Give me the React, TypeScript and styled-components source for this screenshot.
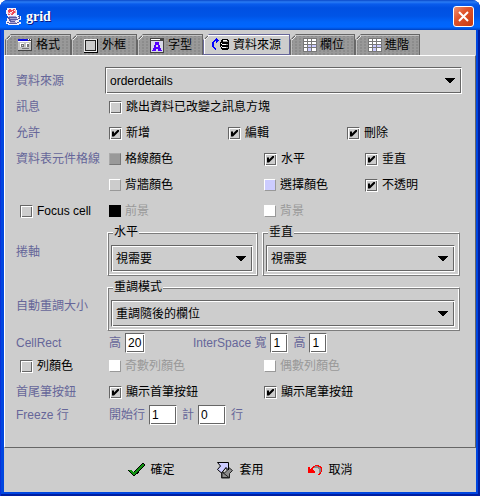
import React, { useId } from "react";
import styled, { createGlobalStyle, css } from "styled-components";

const face = "#cdcdcd";
const dark = "#666666";
const tabFace = "#999999";
const labelColor = "#666699";

const GlobalStyle = createGlobalStyle`
  *, *::before, *::after { box-sizing: border-box; }
  body {
    margin: 0;
    background: #fff;
    color: #000;
    font: 12px/16px "Liberation Sans", "Noto Sans CJK TC", sans-serif;
  }
  button, input, select { font: inherit; color: inherit; }
`;

const etched = css`
  border: 1px solid;
  border-color: ${dark} #fff #fff ${dark};
  box-shadow: inset 1px 1px #fff, inset -1px -1px ${dark};
`;

const Window = styled.main`
  display: flex;
  flex-direction: column;
  min-height: 100vh;
  padding: 0 4px 4px;
  border-radius: 8px 8px 0 0;
  background: #0046e0;
  box-shadow: inset 1px 0 #0831d9, inset -2px -2px #001ea0;
`;

const TitleBar = styled.header`
  display: flex;
  align-items: center;
  gap: 4px;
  height: 30px;
  margin: 0 -4px;
  padding: 3px 6px 0;
  border-radius: 8px 8px 0 0;
  background: linear-gradient(
    #0a48c8 0, #2a7cf4 2px, #0a5cec 4px, #0050e2 8px, #0054e6 16px,
    #0064fa 22px, #0066ff 27px, #0050d8 29px, #0040c0 30px
  );
`;

const Title = styled.h1`
  flex: 1;
  margin: 0;
  color: #fff;
  font: bold 14px/18px "Liberation Serif", serif;
  text-shadow: 1px 1px #0a1883;
`;

const CloseButton = styled.button`
  display: grid;
  place-items: center;
  width: 21px;
  height: 21px;
  padding: 0;
  border: 1px solid #fff;
  border-radius: 3px;
  background: linear-gradient(135deg, #ee9070, #e0542c 40%, #c83a10);
`;

const Body = styled.div`
  display: flex;
  flex: 1;
  flex-direction: column;
  padding-top: 4px;
  background: ${face};
`;

const TabBar = styled.nav`
  display: flex;
  padding-left: 1px;
`;

const Tab = styled.button<{ $selected?: boolean }>`
  display: flex;
  align-items: center;
  gap: 3px;
  height: 21px;
  padding: ${(p) => (p.$selected ? "0 8px" : "0 10px 0 11px")};
  white-space: nowrap;
  border: 1px solid ${dark};
  border-bottom: ${(p) => (p.$selected ? `1px solid ${labelColor}` : 0)};
  border-color: ${(p) => (p.$selected ? labelColor : dark)};
  box-shadow: inset 1px 1px ${(p) => (p.$selected ? "#fff" : "#c4c4c4")};
  background:
    linear-gradient(135deg, ${dark} 5px, #eee 5px, #eee 6px, transparent 6px) border-box,
    radial-gradient(circle at 1px 1px, ${(p) => (p.$selected ? face : "#8c8c8c")} 1px, transparent 1px) 0 0 / 4px 3px,
    ${(p) => (p.$selected ? face : tabFace)};
  clip-path: polygon(6px 0, 100% 0, 100% 100%, 0 100%, 0 6px);
`;

const Panel = styled.section`
  flex: 1;
  padding: 11px 13px 16px 11px;
  border: 1px solid;
  border-color: #fff ${dark} ${dark} #fff;
`;

const Row = styled.div<{ $height?: number }>`
  display: grid;
  grid-template-columns: 89px minmax(0, 1fr);
  align-items: center;
  min-height: ${(p) => p.$height ?? 26}px;
`;

const RowLabel = styled.span`
  color: ${labelColor};
  white-space: nowrap;
`;

const RowCheck = styled.div`
  padding-left: 4px;
`;

const Columns = styled.div<{ $template: string }>`
  display: grid;
  grid-template-columns: ${(p) => p.$template};
  align-items: center;
  padding-left: 4px;
`;

const Groups = styled.div<{ $template: string }>`
  display: grid;
  grid-template-columns: ${(p) => p.$template};
  gap: 4px;
  padding: 0 2px 3px;
`;

const LastGroups = styled(Groups)`
  padding: 0 2px 2px;
`;

const Fieldset = styled.fieldset`
  min-width: 0;
  margin: 0;
  padding: 5px 4px 3px 3px;
  border: 1px solid;
  border-color: #fff #7c7c7c #7c7c7c #fff;
  box-shadow: inset 1px 1px #7c7c7c, inset -1px -1px #fff;
`;

const Legend = styled.legend`
  margin-left: 2px;
  padding: 0 1px;
  background: ${face};
`;

const ComboBox = styled.div`
  display: grid;
  grid-template-columns: minmax(0, 1fr);
  align-items: center;
  > * { grid-area: 1 / 1; }
  > svg {
    justify-self: end;
    margin-right: 7px;
    pointer-events: none;
  }
`;

const Select = styled.select`
  ${etched}
  appearance: none;
  width: 100%;
  height: 27px;
  padding: 0 20px 0 4px;
  border-radius: 0;
  background: ${face};
`;

const CheckLabel = styled.label`
  display: flex;
  align-items: center;
  gap: 4px;
  white-space: nowrap;
`;

const CheckBox = styled.input`
  ${etched}
  appearance: none;
  flex: none;
  width: 13px;
  height: 13px;
  margin: 0;
  background: ${face};
  &:checked::before {
    content: "";
    display: block;
    width: 7px;
    height: 7px;
    margin: 2px;
    background: #000;
    clip-path: polygon(0 2px, 2px 2px, 2px 4px, 6px 0, 7px 0, 7px 2px, 2px 7px, 0 7px);
  }
`;

const SwatchButton = styled.button<{ $color: string }>`
  display: flex;
  align-items: center;
  gap: 4px;
  padding: 0;
  border: 0;
  background: none;
  white-space: nowrap;
  &:disabled { color: ${tabFace}; }
  &::before {
    content: "";
    width: 12px;
    height: 12px;
    border: 1px solid;
    border-color: ${(p) =>
      p.$color === "#000000" ? "#000" : p.$color === "#999999" ? "#aaa #777 #777 #aaa" : "#fff #999 #999 #fff"};
    background: ${(p) => p.$color};
  }
`;

const Fields = styled.div`
  display: flex;
  align-items: center;
  gap: 5px;
  padding-left: 4px;
  color: ${labelColor};
`;

const FieldLabel = styled.label<{ $apart?: boolean }>`
  display: flex;
  align-items: center;
  gap: 4px;
  margin-left: ${(p) => (p.$apart ? 43 : 0)}px;
  white-space: nowrap;
`;

const TextBox = styled.input<{ $width: number }>`
  ${etched}
  width: ${(p) => p.$width}px;
  height: 20px;
  padding: 0 0 0 2px;
  border-radius: 0;
  background: #fff;
  color: #000;
`;

const Footer = styled.footer`
  display: flex;
  justify-content: center;
  gap: 42px;
  padding: 13px 0;
`;

const ActionButton = styled.button`
  display: flex;
  align-items: center;
  gap: 5px;
  padding: 0;
  border: 0;
  background: none;
`;

function Check({ text, on }: { text: string; on?: boolean }) {
  return (
    <CheckLabel>
      <CheckBox type="checkbox" defaultChecked={on} />
      {text}
    </CheckLabel>
  );
}

function Combo({ name, value }: { name: string; value: string }) {
  return (
    <ComboBox>
      <Select aria-label={name} defaultValue={value}>
        <option>{value}</option>
      </Select>
      <svg width="10" height="5" shapeRendering="crispEdges">
        <path d="M0 0h10v1H9v1H8v1H7v1H6v1H4V4H3V3H2V2H1V1H0z" />
      </svg>
    </ComboBox>
  );
}

function Group({ title, value }: { title: string; value: string }) {
  return (
    <Fieldset>
      <Legend>{title}</Legend>
      <Combo name={title} value={value} />
    </Fieldset>
  );
}

function Field({ text, value, width, apart }: { text: string; value: string; width: number; apart?: boolean }) {
  const id = useId();
  return (
    <FieldLabel htmlFor={id} $apart={apart}>
      {text}
      <TextBox id={id} defaultValue={value} $width={width} />
    </FieldLabel>
  );
}

const JavaCup = () => (
  <svg width="16" height="17" viewBox="0 0 16 17" shapeRendering="crispEdges">
    <path fill="#f4f0fa" d="M1 0h9v2h1v5h2v1h2v4h-2v2h2v2h-2v1H2v-1H0v-3h1v-3h1V8H1V6H0V2h1z" />
    <path fill="#ee4858" d="M3 1h2v1h2V1h2v1H8v1H6v1H4v1H3V4H2V2h1zM7 3h2v2H8v1H7v1H5V6h1V4h1zM2 6h2v1H2z" />
    <path fill="#f8a0a8" d="M2 4h1v2H2zM4 5h2v1H4zM9 2h1v3H9z" />
    <path fill="#5858a0" d="M2 9h9v1H4v1h6v1H5v1h4v1H4v-1H3v-2H2zM12 8h2v3h-2v1h-2v-1h2v-1h1V9h-1zM1 14h2v1h8v-1h2v1h-2v1H3v-1H1z" />
    <path fill="#a8a0d4" d="M4 10h7v1H4zM5 12h5v1H5zM3 8h7v1H3zM4 14h6v1H4z" />
  </svg>
);

const FormIcon = () => (
  <svg width="16" height="14" shapeRendering="crispEdges">
    <path fill="#444" d="M1 1h14v12H1z" />
    <path fill="#c4c4c4" d="M1 3h13v9H1z" />
    <path fill="#1010e0" d="M1 1h10v2H1z" />
    <path fill="#fff" d="M11 1h1v1h-1zM13 1h1v1h-1zM1 3h13v1H1zM3 5h4v4H3zM9 5h3v4H9z" />
    <path fill="#777" d="M4 6h3v3H4zM10 6h2v3h-2zM5 10h7v1H5z" />
    <path fill="#ddd" d="M5 7h1v1H5z" />
  </svg>
);

const BorderIcon = () => (
  <svg width="16" height="15" shapeRendering="crispEdges">
    <path fill="#000" d="M1 1h14v14H1z" />
    <path fill="#eee" d="M1 1h13v13H1z" />
    <path fill="#222" d="M2 2h11v11H2z" />
    <path fill="#ccc" d="M3 3h9v9H3z" />
  </svg>
);

const FontIcon = () => (
  <svg width="16" height="16" shapeRendering="crispEdges">
    <path fill="#444" d="M1 1h14v15H1z" />
    <path fill="#fff" d="M2 2h9v1H2z" />
    <path fill="#d8d8e8" d="M2 4h12v11H2z" />
    <path fill="#5500ff" d="M6 5h4v3h1v3h1v2h1v1H9v-2H7v2H3v-1h1v-2h1V8h1zM7 8v2h2V8z" fillRule="evenodd" />
  </svg>
);

const DatabaseIcon = () => (
  <svg width="18" height="13" shapeRendering="crispEdges">
    <path fill="#0000ff" d="M3 1h1V0h1v1h1v1h1v1H6v1H5v1H4V3H3v1H2v5h1v1h1v2H3v-1H2v-1H1V9H0V4h1V3h1V2h1z" />
    <path d="M9 2h1V1h6v1h1v9h-1v1h-6v-1H9V9H8V4h1z" />
    <path fill="#fff" d="M11 2h4v1h-4zM9 5h1v1h4v1h-4V6H9zM9 8h1v1h4v1h-4V9H9z" />
    <path fill="#999" d="M14 6h2v1h-2zM14 9h2v1h-2zM11 3h5v1h-5z" />
  </svg>
);

const TableIcon = () => (
  <svg width="15" height="14" shapeRendering="crispEdges">
    <path fill="#777" d="M1 0h14v14H1z" />
    <path
      fill="#fff"
      d="M2 1h3v2H2zM6 1h3v2H6zM10 1h4v2h-4zM2 4h3v2H2zM6 4h3v2H6zM10 4h4v2h-4zM2 7h3v2H2zM2 10h3v3H2zM10 10h4v3h-4z"
    />
    <path fill="#ccccff" d="M6 7h3v2H6zM10 7h4v2h-4zM6 10h3v3H6z" />
  </svg>
);

const OkIcon = () => (
  <svg width="18" height="16" shapeRendering="crispEdges">
    <path fill="#000" d="M1 8h4v1h1v1h1V9h1V8h1V7h1V6h1V5h1V4h1V3h1V2h1V1h2v1h1v2h-1v1h-1v1h-1v1h-1v1h-1v1h-1v2h-1v1H9v1H8v1H6v-1H5v-1H4v-1H3v-1H2v-1H1z" />
    <path fill="#109010" d="M2 8h3v1h1v1h2V9h1V8h1V7h1V6h1V5h1V4h1V3h1V2h2v2h-1v1h-1v1h-1v1h-1v1h-1v1h-1v1h-1v1H9v1H8v1H6v-1H5v-1H4v-1H3V9H2z" />
  </svg>
);

const ApplyIcon = () => (
  <svg width="18" height="18">
    <path d="M8.500 6.500l3-1 5 4-3 3v4.500H5.500V10l3 2 3-3z" fill="#8c8c8c" stroke="#222" />
    <path d="M1.500 1.500h11V9L10 6.500 5.500 12 1.500 8.500l3-3.500z" fill="#ccccff" stroke="#000" />
    <path d="M6 16.500V11l7 5.500z" fill="#8c8c8c" stroke="#222" />
  </svg>
);

const CancelIcon = () => (
  <svg width="18" height="12" shapeRendering="crispEdges">
    <path fill="#888" d="M8 2h5v1h1v1h1v5h-2V5h-1V4H8z" />
    <path fill="#ff0000" d="M2 3h2v2h1V4h1V3h1V2h2V1h4v1h2v1h1v5h-1v2h-1v1h-2v-1h1V9h1V8h1V4h-1V3h-2V2H9v1H8v1H7v2h1v1h1v2H2z" />
  </svg>
);

const tabs: { text: string; icon: React.ReactNode; selected?: boolean }[] = [
  { text: "格式", icon: <FormIcon /> },
  { text: "外框", icon: <BorderIcon /> },
  { text: "字型", icon: <FontIcon /> },
  { text: "資料來源", icon: <DatabaseIcon />, selected: true },
  { text: "欄位", icon: <TableIcon /> },
  { text: "進階", icon: <TableIcon /> },
];

const thirds = "119fr 119fr 115fr";
const wide = "155fr 101fr 97fr";

export default function App() {
  return (
    <>
      <GlobalStyle />
      <Window>
        <TitleBar>
          <JavaCup />
          <Title>grid</Title>
          <CloseButton aria-label="關閉">
            <svg width="13" height="13" stroke="#fff" strokeWidth="2">
              <path d="M2 2l9 9M11 2l-9 9" />
            </svg>
          </CloseButton>
        </TitleBar>
        <Body>
          <TabBar role="tablist">
            {tabs.map((tab) => (
              <Tab key={tab.text} role="tab" aria-selected={!!tab.selected} $selected={tab.selected}>
                {tab.icon}
                {tab.text}
              </Tab>
            ))}
          </TabBar>
          <Panel>
            <Row>
              <RowLabel>資料來源</RowLabel>
              <Combo name="資料來源" value="orderdetails" />
            </Row>
            <Row>
              <RowLabel>訊息</RowLabel>
              <Columns $template="1fr">
                <Check text="跳出資料已改變之訊息方塊" />
              </Columns>
            </Row>
            <Row>
              <RowLabel>允許</RowLabel>
              <Columns $template={thirds}>
                <Check text="新增" on />
                <Check text="編輯" on />
                <Check text="刪除" on />
              </Columns>
            </Row>
            <Row>
              <RowLabel>資料表元件格線</RowLabel>
              <Columns $template={wide}>
                <SwatchButton $color="#999999">格線顏色</SwatchButton>
                <Check text="水平" on />
                <Check text="垂直" on />
              </Columns>
            </Row>
            <Row>
              <RowLabel />
              <Columns $template={wide}>
                <SwatchButton $color="#cccccc">背牆顏色</SwatchButton>
                <SwatchButton $color="#ccccff">選擇顏色</SwatchButton>
                <Check text="不透明" on />
              </Columns>
            </Row>
            <Row>
              <RowCheck>
                <Check text="Focus cell" />
              </RowCheck>
              <Columns $template={wide}>
                <SwatchButton $color="#000000" disabled>前景</SwatchButton>
                <SwatchButton $color="#ffffff" disabled>背景</SwatchButton>
              </Columns>
            </Row>
            <Row>
              <RowLabel>捲軸</RowLabel>
              <Groups $template="151fr 198fr">
                <Group title="水平" value="視需要" />
                <Group title="垂直" value="視需要" />
              </Groups>
            </Row>
            <Row>
              <RowLabel>自動重調大小</RowLabel>
              <LastGroups $template="minmax(0, 1fr)">
                <Group title="重調模式" value="重調隨後的欄位" />
              </LastGroups>
            </Row>
            <Row $height={20}>
              <RowLabel>CellRect</RowLabel>
              <Fields>
                <Field text="高" value="20" width={20} />
                <Field text="InterSpace 寬" value="1" width={18} apart />
                <Field text="高" value="1" width={18} />
              </Fields>
            </Row>
            <Row>
              <RowCheck>
                <Check text="列顏色" />
              </RowCheck>
              <Columns $template={wide}>
                <SwatchButton $color="#ffffff" disabled>奇數列顏色</SwatchButton>
                <SwatchButton $color="#ffffff" disabled>偶數列顏色</SwatchButton>
              </Columns>
            </Row>
            <Row>
              <RowLabel>首尾筆按鈕</RowLabel>
              <Columns $template="155fr 198fr">
                <Check text="顯示首筆按鈕" on />
                <Check text="顯示尾筆按鈕" on />
              </Columns>
            </Row>
            <Row $height={20}>
              <RowLabel>Freeze 行</RowLabel>
              <Fields>
                <Field text="開始行" value="1" width={28} />
                <Field text="計" value="0" width={28} />
                行
              </Fields>
            </Row>
          </Panel>
          <Footer>
            <ActionButton>
              <OkIcon />
              確定
            </ActionButton>
            <ActionButton>
              <ApplyIcon />
              套用
            </ActionButton>
            <ActionButton>
              <CancelIcon />
              取消
            </ActionButton>
          </Footer>
        </Body>
      </Window>
    </>
  );
}
